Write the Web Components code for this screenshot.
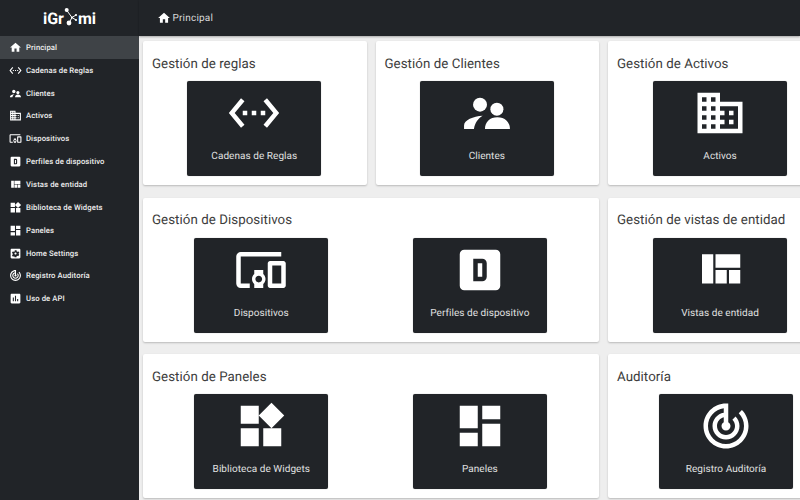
<!DOCTYPE html>
<html lang="es"><head><meta charset="utf-8"><title>iGromi</title>
<style>
html,body{margin:0;height:100%;overflow:hidden;background:#eee;font-family:Roboto,"Liberation Sans",sans-serif;text-rendering:geometricPrecision}
</style></head><body>
<app-shell>
  <side-nav slot="side">
    <nav-item icon="home" active>Principal</nav-item>
    <nav-item icon="rules">Cadenas de Reglas</nav-item>
    <nav-item icon="people">Clientes</nav-item>
    <nav-item icon="domain">Activos</nav-item>
    <nav-item icon="devices">Dispositivos</nav-item>
    <nav-item icon="profile">Perfiles de dispositivo</nav-item>
    <nav-item icon="quilt">Vistas de entidad</nav-item>
    <nav-item icon="widgets">Biblioteca de Widgets</nav-item>
    <nav-item icon="dashboard">Paneles</nav-item>
    <nav-item icon="settings">Home Settings</nav-item>
    <nav-item icon="track">Registro Auditoría</nav-item>
    <nav-item icon="chart">Uso de API</nav-item>
  </side-nav>
  <top-bar slot="top">Principal</top-bar>
  <card-row>
    <menu-card title="Gestión de reglas" w="223.5"><menu-tile icon="rules">Cadenas de Reglas</menu-tile></menu-card>
    <menu-card title="Gestión de Clientes" w="223.5"><menu-tile icon="people">Clientes</menu-tile></menu-card>
    <menu-card title="Gestión de Activos" w="225"><menu-tile icon="domain">Activos</menu-tile></menu-card>
  </card-row>
  <card-row>
    <menu-card title="Gestión de Dispositivos" w="456"><menu-tile icon="devices">Dispositivos</menu-tile><menu-tile icon="profile">Perfiles de dispositivo</menu-tile></menu-card>
    <menu-card title="Gestión de vistas de entidad" w="225"><menu-tile icon="quilt">Vistas de entidad</menu-tile></menu-card>
  </card-row>
  <card-row>
    <menu-card title="Gestión de Paneles" w="456"><menu-tile icon="widgets">Biblioteca de Widgets</menu-tile><menu-tile icon="dashboard">Paneles</menu-tile></menu-card>
    <menu-card title="Auditoría" w="237"><menu-tile icon="track">Registro Auditoría</menu-tile></menu-card>
  </card-row>
</app-shell>
<script>
const ICONS={
home:'<path d="M10 20v-6h4v6h5v-8h3L12 3 2 12h3v8z"/>',
rules:'<path d="M7.77 6.76L6.23 5.48.82 12l5.41 6.52 1.54-1.28L3.42 12l4.35-5.24zM7 13h2v-2H7v2zm10-2h-2v2h2v-2zm-6 2h2v-2h-2v2zm6.77-7.52l-1.54 1.28L20.58 12l-4.35 5.24 1.54 1.28L23.18 12l-5.41-6.52z"/>',
people:'<circle cx="8.9" cy="8.3" r="3.1"/><circle cx="16.4" cy="10.3" r="2.9"/><path d="M1.8 19.1v-1.6c0-2.3 4-4.1 8.3-4.3-2 1.2-3.5 3.2-3.9 5.9zM11.1 19.1c0-3.1 2.2-5.2 5.5-5.2s5.6 2.1 5.6 5.2z"/>',
domain:'<path d="M12 7V3H2v18h20V7H10zM6 19H4v-2h2v2zm0-4H4v-2h2v2zm0-4H4V9h2v2zm0-4H4V5h2v2zm4 12H8v-2h2v2zm0-4H8v-2h2v2zm0-4H8V9h2v2zm0-4H8V5h2v2zm10 12h-8v-2h2v-2h-2v-2h2v-2h-2V9h8v10zm-2-8h-2v2h2v-2zm0 4h-2v2h2v-2z"/>',
devices:'<path d="M3 6h18V4H3c-1.1 0-2 .9-2 2v12c0 1.1.9 2 2 2h4v-2H3V6zm10 6H9v1.78c-.61.55-1 1.33-1 2.22s.39 1.67 1 2.22V20h4v-1.78c.61-.55 1-1.34 1-2.22s-.39-1.67-1-2.22V12zm-2 5.5c-.83 0-1.5-.67-1.5-1.5s.67-1.5 1.5-1.5 1.5.67 1.5 1.5-.67 1.5-1.5 1.5zM22 8h-6c-.5 0-1 .5-1 1v10c0 .5.5 1 1 1h6c.5 0 1-.5 1-1V9c0-.5-.5-1-1-1zm-1 10h-4v-8h4v8z"/>',
profile:'<path fill-rule="evenodd" d="M5 3H19A2 2 0 0 1 21 5V19A2 2 0 0 1 19 21H5A2 2 0 0 1 3 19V5A2 2 0 0 1 5 3ZM9 7V17H13A2 2 0 0 0 15 15V9A2 2 0 0 0 13 7ZM11 9H13V15H11Z"/>',
quilt:'<path d="M10 18h5v-6h-5v6zm-6 0h5V5H4v13zm12 0h5v-6h-5v6zM10 5v6h11V5H10z"/>',
widgets:'<path d="M13 13v8h8v-8h-8zM3 21h8v-8H3v8zM3 3v8h8V3H3zm13.66-1.31L11 7.34 16.66 13l5.66-5.66-5.66-5.65z"/>',
dashboard:'<path d="M3 13h8V3H3v10zm0 8h8v-6H3v6zm10 0h8V11h-8v10zm0-18v6h8V3h-8z"/>',
settings:'<path d="M12 10c-1.1 0-2 .9-2 2s.9 2 2 2 2-.9 2-2-.9-2-2-2zm7-7H5c-1.11 0-2 .9-2 2v14c0 1.1.89 2 2 2h14c1.11 0 2-.9 2-2V5c0-1.1-.89-2-2-2zm-1.75 9c0 .23-.02.46-.05.68l1.48 1.16c.13.11.17.3.08.45l-1.4 2.42c-.09.15-.27.21-.43.15l-1.74-.7c-.36.28-.76.51-1.18.69l-.26 1.85c-.03.17-.18.3-.35.3h-2.8c-.17 0-.32-.13-.35-.3L10.3 17.85c-.43-.18-.82-.41-1.18-.69l-1.74.7c-.16.06-.34 0-.43-.15l-1.4-2.42c-.09-.15-.05-.34.08-.45l1.48-1.16c-.03-.23-.05-.46-.05-.68 0-.23.02-.46.05-.68l-1.48-1.16c-.13-.11-.17-.3-.08-.45l1.4-2.42c.09-.15.27-.21.43-.15l1.74.7c.36-.28.76-.51 1.18-.69l.26-1.85c.03-.17.18-.3.35-.3h2.8c.17 0 .32.13.35.3l.26 1.85c.43.18.82.41 1.18.69l1.74-.7c.16-.06.34 0 .43.15l1.4 2.42c.09.15.05.34-.08.45l-1.48 1.16c.03.23.05.46.05.68z"/>',
track:'<path d="M19.07 4.93l-1.41 1.41C19.1 7.79 20 9.79 20 12c0 4.42-3.58 8-8 8s-8-3.58-8-8c0-4.08 3.05-7.44 7-7.93v2.02C8.16 6.57 6 9.03 6 12c0 3.31 2.69 6 6 6s6-2.69 6-6c0-1.66-.67-3.16-1.76-4.24l-1.41 1.41C15.55 9.9 16 10.9 16 12c0 2.21-1.79 4-4 4s-4-1.79-4-4c0-1.86 1.28-3.41 3-3.86v2.14c-.6.35-1 .98-1 1.72 0 1.1.9 2 2 2s2-.9 2-2c0-.74-.4-1.38-1-1.72V2h-1C6.48 2 2 6.48 2 12s4.48 10 10 10 10-4.48 10-10c0-2.76-1.12-5.26-2.93-7.07z"/>',
chart:'<path d="M19 3H5c-1.1 0-2 .9-2 2v14c0 1.1.9 2 2 2h14c1.1 0 2-.9 2-2V5c0-1.1-.9-2-2-2zM9 17H7v-7h2v7zm4 0h-2V7h2v10zm4 0h-2v-4h2v4z"/>'
};
const svg=(n,s)=>`<svg width="${s}" height="${s}" viewBox="0 0 24 24" fill="#fff" aria-hidden="true">${ICONS[n]||''}</svg>`;
class Base extends HTMLElement{
  render(html){ if(!this.shadowRoot) this.attachShadow({mode:'open'}); this.shadowRoot.innerHTML=html; }
}
customElements.define('app-shell',class extends Base{connectedCallback(){this.render(`<style>
:host{display:grid;grid-template-columns:139px 1fr;grid-template-rows:36px 1fr;height:500px;width:800px;overflow:hidden}
.side{grid-row:1/3;grid-column:1;display:block;min-height:0}
.top{grid-row:1;grid-column:2;display:block}
main{grid-row:2;grid-column:2;display:flex;flex-direction:column;gap:12.6px;padding:5px 0 0 4px;overflow:hidden;min-width:0}
</style><div class="side"><slot name="side"></slot></div><div class="top"><slot name="top"></slot></div><main><slot></slot></main>`)}});
customElements.define('side-nav',class extends Base{connectedCallback(){this.render(`<style>
:host{display:flex;flex-direction:column;height:500px;background:#212428;color:#fff}
.logo{height:36px;flex:none;display:flex;align-items:center;justify-content:center;font:700 16px Roboto,sans-serif;color:#fff;box-sizing:border-box}
.logo svg{flex:none;display:block;margin-top:-3px}
nav{display:flex;flex-direction:column}
</style><div class="logo"><span>iGr</span><svg width="14" height="20" viewBox="0 0 14 20" fill="#fff" stroke="#fff" aria-hidden="true"><path d="M2.5 3 L8 10.5 L5 16 M8 10.5 L12 8 M8 10.5 L12 13" fill="none" stroke-width="1"/><circle cx="2.7" cy="3" r="2" stroke="none"/><circle cx="5" cy="16" r="2.4" stroke="none"/><circle cx="8" cy="10.5" r="1" stroke="none"/><circle cx="12" cy="8" r="1.1" stroke="none"/><circle cx="12" cy="13" r="1.1" stroke="none"/></svg><span>mi</span></div><nav><slot></slot></nav>`)}});
customElements.define('nav-item',class extends Base{connectedCallback(){const a=this.hasAttribute('active');this.render(`<style>
:host{display:flex;align-items:center;height:22.85px;padding-left:9px;gap:4px;box-sizing:border-box;font:500 7.7px Roboto,sans-serif;letter-spacing:.1px;color:#eee;white-space:nowrap;background:${a?'#3f4347':'transparent'}}
svg{flex:none;display:block}
</style>${svg(this.getAttribute('icon'),13)}<slot></slot>`)}});
customElements.define('top-bar',class extends Base{connectedCallback(){this.render(`<style>
:host{display:flex;align-items:center;height:36px;padding-left:17.5px;gap:2px;box-sizing:border-box;background:#212428;color:#d9dadb;font:400 10px Roboto,sans-serif;letter-spacing:.2px;box-shadow:0 1px 2px rgba(0,0,0,.3);position:relative}
svg{display:block}
</style>${svg('home',14)}<slot></slot>`)}});
customElements.define('card-row',class extends Base{connectedCallback(){this.render(`<style>
:host{display:flex;gap:9px;flex:none;height:144px}
</style><slot></slot>`)}});
customElements.define('menu-card',class extends Base{connectedCallback(){this.render(`<style>
:host{display:flex;flex-direction:column;flex:none;box-sizing:border-box;width:${this.getAttribute('w')}px;height:144px;background:#fff;border-radius:2px;box-shadow:0 1px 2px rgba(0,0,0,.22);padding:15.6px 8.5px 0 9px}
h2{margin:0;font:400 13.3px/16px Roboto,sans-serif;color:#3c3c3c;letter-spacing:.05px;white-space:nowrap;height:24.4px}
.tiles{display:flex;padding-right:1.4px}
::slotted(menu-tile){flex:1}
</style><h2>${this.getAttribute('title')}</h2><div class="tiles"><slot></slot></div>`)}});
customElements.define('menu-tile',class extends Base{connectedCallback(){this.render(`<style>
:host{display:flex;justify-content:center}
.t{width:134px;height:95px;box-sizing:border-box;background:#212428;border-radius:2px;display:flex;flex-direction:column;align-items:center;color:#e0e1e1;font:400 10px Roboto,sans-serif;letter-spacing:.05px;padding-top:5px;box-shadow:0 0 1px rgba(0,0,0,.4)}
svg{display:block}
.l{margin-top:11px;line-height:12px;white-space:nowrap}
</style><div class="t">${svg(this.getAttribute('icon'),54)}<span class="l"><slot></slot></span></div>`)}});
</script>
</body></html>
